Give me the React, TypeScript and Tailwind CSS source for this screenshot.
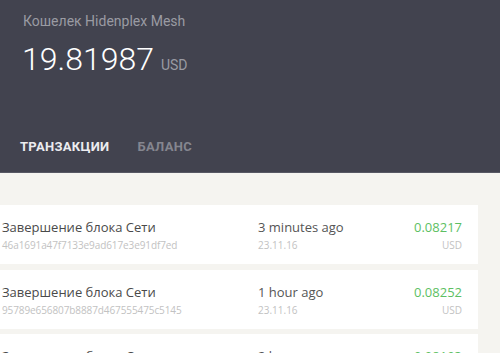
import React from "react";

const transactions = [
  { title: "Завершение блока Сети", hash: "46a1691a47f7133e9ad617e3e91df7ed", time: "3 minutes ago", date: "23.11.16", amount: "0.08217" },
  { title: "Завершение блока Сети", hash: "95789e656807b8887d467555475c5145", time: "1 hour ago", date: "23.11.16", amount: "0.08252" },
  { title: "Завершение блока Сети", hash: "0c2b7e91a7d45f3e8811b64d2a9c7e10", time: "2 hours ago", date: "23.11.16", amount: "0.08193" },
];

export default function App() {
  return (
    <div className="w-[500px] h-[353px] overflow-hidden bg-[#f5f4f0] font-['Open_Sans',sans-serif]">
      {/* Wallet header */}
      <header className="h-[173px] bg-[#42434f] border-b border-[#575864] flex flex-col pt-[11px] font-['Roboto',sans-serif]">
        <div className="pl-[23px] text-[14px] leading-[20px] text-[#9a9ba3]">Кошелек Hidenplex Mesh</div>
        <div className="pl-[22px] mt-[9px] flex items-baseline">
          <span className="text-[32px] leading-[38px] font-light text-white">19.81987</span>
          <span className="ml-[7px] text-[14px] text-[#9a9ba3]">USD</span>
        </div>
        <nav className="mt-auto pl-[20px] pb-[17px] flex gap-[28px] text-[13px] leading-[16px] font-bold tracking-[0.3px]">
          <span className="text-[#ececef]">ТРАНЗАКЦИИ</span>
          <span className="text-[#85868f]">БАЛАНС</span>
        </nav>
      </header>

      {/* Transactions */}
      <div className="pt-[32px] flex flex-col gap-[5.5px]">
        {transactions.map((t, i) => (
          <div key={i} className="w-[478px] h-[59px] shrink-0 bg-white flex pt-[13px] pl-[2px] pr-[16px]">
            <div className="w-[256px]">
              <div className="text-[13px] leading-[18px] text-[#4a4a4a]">{t.title}</div>
              <div className="mt-[2px] text-[10px] leading-[14px] text-[#c2c2c2] tracking-[-0.1px]">{t.hash}</div>
            </div>
            <div className="flex-1">
              <div className="text-[13px] leading-[18px] text-[#555]">{t.time}</div>
              <div className="mt-[2px] text-[10px] leading-[14px] text-[#c2c2c2]">{t.date}</div>
            </div>
            <div className="text-right">
              <div className="text-[13px] leading-[18px] text-[#5dbf63]">{t.amount}</div>
              <div className="mt-[2px] text-[10px] leading-[14px] text-[#c2c2c2]">USD</div>
            </div>
          </div>
        ))}
      </div>
    </div>
  );
}
